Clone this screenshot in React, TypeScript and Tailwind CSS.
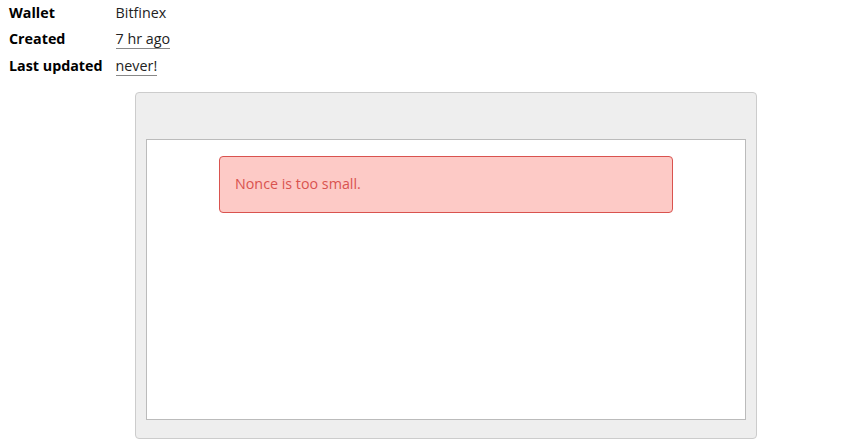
export default function App() {
  const rows = [
    { label: "Wallet", value: "Bitfinex", link: false },
    { label: "Created", value: "7 hr ago", link: true },
    { label: "Last updated", value: "never!", link: true },
  ];

  return (
    <div className="min-h-screen bg-white text-[14.3px] text-[#222]" style={{ fontFamily: '"Open Sans", "Noto Sans", sans-serif' }}>
      <table className="ml-[9px] -mt-[1px] border-collapse">
        <tbody>
          {rows.map((r) => (
            <tr key={r.label} className="h-[26.5px]">
              <th className="pr-[13px] text-left font-bold text-black">{r.label}</th>
              <td>
                {r.link ? (
                  <span className="border-b border-[#888] leading-[16px]">{r.value}</span>
                ) : (
                  r.value
                )}
              </td>
            </tr>
          ))}
        </tbody>
      </table>

      <div className="ml-[135px] mt-[13px] h-[347px] w-[622px] rounded-[4px] border border-[#ccc] bg-[#eee] px-[10px] pb-[18px] pt-[46px]">
        <div className="h-full border border-[#bbb] bg-white px-[72px] pt-[16px]">
          <div className="flex h-[57px] items-center rounded-[4px] border border-[#d9534f] bg-[#fdcac6] px-[15px] text-[#d9534f]">
            Nonce is too small.
          </div>
        </div>
      </div>
    </div>
  );
}
